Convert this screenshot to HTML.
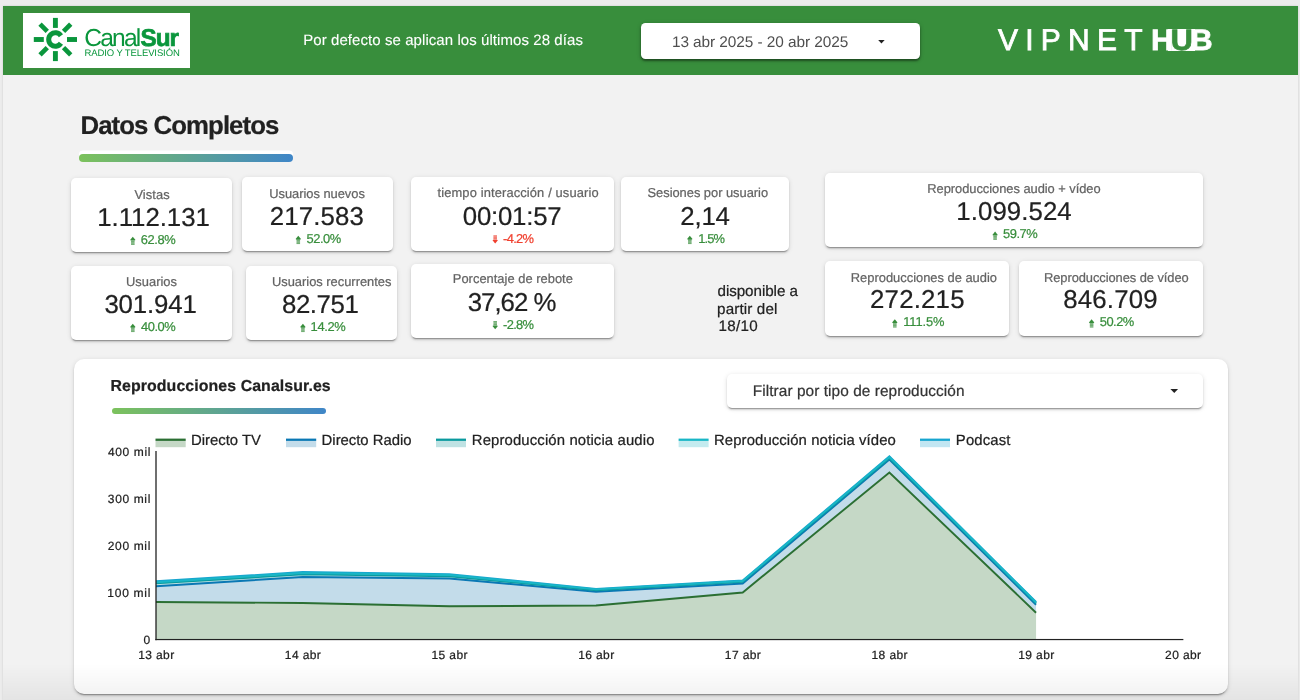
<!DOCTYPE html>
<html lang="es"><head><meta charset="utf-8"><title>Datos Completos</title>
<style>
html,body{margin:0;padding:0}
body{width:1300px;height:700px;overflow:hidden;background:#ececec;font-family:"Liberation Sans",sans-serif;text-rendering:geometricPrecision;position:relative}
#page{position:absolute;left:3.3px;top:5.6px;width:1294.3px;height:695px;background:#f2f2f2;box-shadow:0 0 2px rgba(0,0,0,.14)}
#hdr{position:absolute;left:3.4px;top:5.8px;width:1294.2px;height:69px;background:#388e3c}
.t{position:absolute;white-space:pre;line-height:1;display:block;-webkit-text-stroke:.22px currentColor}
.box{position:absolute;background:#fff}
.card{border-radius:5px;box-shadow:0 2px 1px -1px rgba(0,0,0,.15),0 3px 1px -2px rgba(0,0,0,.14),0 2px 2px 0 rgba(0,0,0,.12),0 1px 5px 0 rgba(0,0,0,.12)}
.bar{position:absolute;background:linear-gradient(90deg,#7cc25c,#3f86c8)}
svg{position:absolute;left:0;top:0;overflow:visible}
#all{position:absolute;left:0;top:0;width:1300px;height:700px;will-change:transform}
#fade{position:absolute;left:3px;top:664px;width:1295px;height:36px;background:linear-gradient(180deg,rgba(0,0,0,0),rgba(0,0,0,.055))}
</style></head><body>
<div id="page"></div>
<div id="hdr"></div>

<div class="box" style="left:23px;top:13px;width:167px;height:55px"></div>
<svg width="1300" height="700" viewBox="0 0 1300 700"><g fill="#0a963c"><rect x="52.95" y="17.90" width="4.9" height="10" transform="rotate(0 55.4 39.5)"/><rect x="53.05" y="17.80" width="4.7" height="10.2" transform="rotate(45 55.4 39.5)"/><rect x="52.95" y="17.90" width="4.9" height="10" transform="rotate(90 55.4 39.5)"/><rect x="53.05" y="17.80" width="4.7" height="10.2" transform="rotate(135 55.4 39.5)"/><rect x="52.95" y="17.90" width="4.9" height="10" transform="rotate(180 55.4 39.5)"/><rect x="53.05" y="17.80" width="4.7" height="10.2" transform="rotate(225 55.4 39.5)"/><rect x="52.95" y="17.90" width="4.9" height="10" transform="rotate(270 55.4 39.5)"/><rect x="53.05" y="17.80" width="4.7" height="10.2" transform="rotate(315 55.4 39.5)"/></g><path d="M60.95 35.75A6.7 6.7 0 1 0 60.95 43.25" fill="none" stroke="#0a963c" stroke-width="5"/></svg>
<div class="box" style="left:640.8px;top:22.8px;width:279.2px;height:36.4px;border-radius:4.5px;box-shadow:0 2px 2px rgba(0,0,0,.35),0 1px 4px rgba(0,0,0,.25)"></div>
<svg width="1300" height="700"><path d="M878.2 40.1h6.5l-3.25 3.3z" fill="#222"/></svg>
<div class="box" style="left:1168px;top:29.2px;width:27px;height:21.6px"></div>
<div class="bar" style="left:79.3px;top:154.2px;width:214.2px;height:8.3px;border-radius:4.2px;box-shadow:0 -3.6px 0 0 #fff"></div>
<div class="box card" style="left:71.4px;top:177.9px;width:160.8px;height:74.55px"></div>
<div class="box card" style="left:241.7px;top:176.7px;width:151.3px;height:74.6px"></div>
<div class="box card" style="left:410.9px;top:177.1px;width:203.2px;height:73.95px"></div>
<div class="box card" style="left:621.4px;top:177.2px;width:167.2px;height:73.95px"></div>
<div class="box card" style="left:825.3px;top:172.9px;width:377.7px;height:74.4px"></div>
<div class="box card" style="left:71.4px;top:265.6px;width:160.8px;height:74.4px"></div>
<div class="box card" style="left:245.75px;top:265.7px;width:151.5px;height:74.3px"></div>
<div class="box card" style="left:410.9px;top:263.5px;width:203.2px;height:74.4px"></div>
<div class="box card" style="left:825.1px;top:261.1px;width:184px;height:74.5px"></div>
<div class="box card" style="left:1018.7px;top:261.1px;width:184.1px;height:74.5px"></div>
<svg width="1300" height="700"><g fill="#388e3c"><path d="M132.8 236.65L135.5 239.95L134.6 240.55H131L130.1 239.95z"/><rect x="131.05" y="240.45" width="3.5" height="4.5" opacity=".5"/><rect x="131.05" y="241.15" width="3.5" height=".8" opacity=".5"/><rect x="131.05" y="242.55" width="3.5" height=".8" opacity=".5"/><rect x="131.05" y="243.95" width="3.5" height=".8" opacity=".5"/></g><g fill="#388e3c"><path d="M298.3 235.8L301 239.1L300.1 239.7H296.5L295.6 239.1z"/><rect x="296.55" y="239.6" width="3.5" height="4.5" opacity=".5"/><rect x="296.55" y="240.3" width="3.5" height=".8" opacity=".5"/><rect x="296.55" y="241.7" width="3.5" height=".8" opacity=".5"/><rect x="296.55" y="243.1" width="3.5" height=".8" opacity=".5"/></g><g fill="#f0402f"><path d="M495.2 243.55L497.9 240.25L497 239.65H493.4L492.5 240.25z"/><rect x="493.45" y="235.25" width="3.5" height="4.5" opacity=".5"/><rect x="493.45" y="235.45" width="3.5" height=".8" opacity=".5"/><rect x="493.45" y="236.85" width="3.5" height=".8" opacity=".5"/><rect x="493.45" y="238.25" width="3.5" height=".8" opacity=".5"/></g><g fill="#388e3c"><path d="M689.8 235.8L692.5 239.1L691.6 239.7H688L687.1 239.1z"/><rect x="688.05" y="239.6" width="3.5" height="4.5" opacity=".5"/><rect x="688.05" y="240.3" width="3.5" height=".8" opacity=".5"/><rect x="688.05" y="241.7" width="3.5" height=".8" opacity=".5"/><rect x="688.05" y="243.1" width="3.5" height=".8" opacity=".5"/></g><g fill="#388e3c"><path d="M995.1 231.6L997.8 234.9L996.9 235.5H993.3L992.4 234.9z"/><rect x="993.35" y="235.4" width="3.5" height="4.5" opacity=".5"/><rect x="993.35" y="236.1" width="3.5" height=".8" opacity=".5"/><rect x="993.35" y="237.5" width="3.5" height=".8" opacity=".5"/><rect x="993.35" y="238.9" width="3.5" height=".8" opacity=".5"/></g><g fill="#388e3c"><path d="M132.8 323.8L135.5 327.1L134.6 327.7H131L130.1 327.1z"/><rect x="131.05" y="327.6" width="3.5" height="4.5" opacity=".5"/><rect x="131.05" y="328.3" width="3.5" height=".8" opacity=".5"/><rect x="131.05" y="329.7" width="3.5" height=".8" opacity=".5"/><rect x="131.05" y="331.1" width="3.5" height=".8" opacity=".5"/></g><g fill="#388e3c"><path d="M302.9 323.8L305.6 327.1L304.7 327.7H301.1L300.2 327.1z"/><rect x="301.15" y="327.6" width="3.5" height="4.5" opacity=".5"/><rect x="301.15" y="328.3" width="3.5" height=".8" opacity=".5"/><rect x="301.15" y="329.7" width="3.5" height=".8" opacity=".5"/><rect x="301.15" y="331.1" width="3.5" height=".8" opacity=".5"/></g><g fill="#388e3c"><path d="M495.2 329.3L497.9 326L497 325.4H493.4L492.5 326z"/><rect x="493.45" y="321" width="3.5" height="4.5" opacity=".5"/><rect x="493.45" y="321.2" width="3.5" height=".8" opacity=".5"/><rect x="493.45" y="322.6" width="3.5" height=".8" opacity=".5"/><rect x="493.45" y="324" width="3.5" height=".8" opacity=".5"/></g><g fill="#388e3c"><path d="M894.8 319.3L897.5 322.6L896.6 323.2H893L892.1 322.6z"/><rect x="893.05" y="323.1" width="3.5" height="4.5" opacity=".5"/><rect x="893.05" y="323.8" width="3.5" height=".8" opacity=".5"/><rect x="893.05" y="325.2" width="3.5" height=".8" opacity=".5"/><rect x="893.05" y="326.6" width="3.5" height=".8" opacity=".5"/></g><g fill="#388e3c"><path d="M1091.6 319.3L1094.3 322.6L1093.4 323.2H1089.8L1088.9 322.6z"/><rect x="1089.85" y="323.1" width="3.5" height="4.5" opacity=".5"/><rect x="1089.85" y="323.8" width="3.5" height=".8" opacity=".5"/><rect x="1089.85" y="325.2" width="3.5" height=".8" opacity=".5"/><rect x="1089.85" y="326.6" width="3.5" height=".8" opacity=".5"/></g></svg>
<div class="box card" style="left:74px;top:359px;width:1153.5px;height:335px;border-radius:10px"></div>
<div class="bar" style="left:111.6px;top:407.7px;width:214.5px;height:6.1px;border-radius:3.1px"></div>
<div class="box card" style="left:727px;top:374px;width:476px;height:33.5px"></div>
<svg width="1300" height="700"><path d="M1170.4 389h7.7l-3.85 4.1z" fill="#222"/></svg>
<svg width="1300" height="700"><polygon points="156,602 302.68,603 449.36,606.3 596.04,605.5 742.71,592.5 889.39,472.5 1036.07,612.7 1036.07,639.5 156,639.5" fill="#c5d8c6"/><polygon points="156,586.2 302.68,577 449.36,578.5 596.04,591.8 742.71,583.5 889.39,459.6 1036.07,604.8 1036.07,612.7 889.39,472.5 742.71,592.5 596.04,605.5 449.36,606.3 302.68,603 156,602" fill="#c3dcea"/><polygon points="156,583.4 302.68,574.4 449.36,576.3 596.04,590.2 742.71,581.9 889.39,458.2 1036.07,603.3 1036.07,604.8 889.39,459.6 742.71,583.5 596.04,591.8 449.36,578.5 302.68,577 156,586.2" fill="#bfe2e3"/><polygon points="156,582.2 302.68,573 449.36,575 596.04,589.4 742.71,581 889.39,457 1036.07,602.5 1036.07,603.3 889.39,458.2 742.71,581.9 596.04,590.2 449.36,576.3 302.68,574.4 156,583.4" fill="#c4ebef"/><polygon points="156,581.3 302.68,572 449.36,574.2 596.04,588.9 742.71,580.4 889.39,456.2 1036.07,602 1036.07,602.5 889.39,457 742.71,581 596.04,589.4 449.36,575 302.68,573 156,582.2" fill="#c2e6f2"/><polyline points="156,602 302.68,603 449.36,606.3 596.04,605.5 742.71,592.5 889.39,472.5 1036.07,612.7" fill="none" stroke="#2b6f33" stroke-width="1.9" stroke-linejoin="miter"/><polyline points="156,586.2 302.68,577 449.36,578.5 596.04,591.8 742.71,583.5 889.39,459.6 1036.07,604.8" fill="none" stroke="#0a78b4" stroke-width="1.9" stroke-linejoin="miter"/><polyline points="156,583.4 302.68,574.4 449.36,576.3 596.04,590.2 742.71,581.9 889.39,458.2 1036.07,603.3" fill="none" stroke="#0a9a9e" stroke-width="1.9" stroke-linejoin="miter"/><polyline points="156,581.3 302.68,572 449.36,574.2 596.04,588.9 742.71,580.4 889.39,456.2 1036.07,602" fill="none" stroke="#17a5cf" stroke-width="1.9" stroke-linejoin="miter"/><polyline points="156,582.2 302.68,573 449.36,575 596.04,589.4 742.71,581 889.39,457 1036.07,602.5" fill="none" stroke="#19b6c6" stroke-width="1.9" stroke-linejoin="miter"/><rect x="155.35" y="451" width="1.3" height="189.2" fill="#222"/><rect x="155.35" y="638.95" width="1028" height="1.2" fill="#222"/><rect x="155.5" y="440.8" width="30.2" height="6.4" fill="#c5d8c6"/><rect x="155.5" y="438.6" width="30.2" height="2.3" fill="#2b6f33"/><rect x="286" y="440.8" width="30.2" height="6.4" fill="#c3dcea"/><rect x="286" y="438.6" width="30.2" height="2.3" fill="#0a78b4"/><rect x="436" y="440.8" width="30" height="6.4" fill="#bfe2e3"/><rect x="436" y="438.6" width="30" height="2.3" fill="#0a9a9e"/><rect x="678.6" y="440.8" width="30" height="6.4" fill="#c4ebef"/><rect x="678.6" y="438.6" width="30" height="2.3" fill="#19b6c6"/><rect x="920" y="440.8" width="30" height="6.4" fill="#c2e6f2"/><rect x="920" y="438.6" width="30" height="2.3" fill="#17a5cf"/></svg>
<div id="all">
<span class="t" style="left:84.37px;top:27px;font-size:24.6px;color:#0a963c;letter-spacing:-1.85px;-webkit-text-stroke:0;">Canal</span>
<span class="t" style="left:140.5px;top:27px;font-size:24.3px;color:#0a963c;font-weight:700;letter-spacing:-1px;-webkit-text-stroke:0.7px #0a963c;">Sur</span>
<span class="t" style="left:84.53px;top:49.12px;font-size:9.5px;color:#0a963c;letter-spacing:-0.11px;-webkit-text-stroke:0;">RADIO Y TELEVISIÓN</span>
<span class="t" style="left:303.23px;top:33px;font-size:15.0px;color:#ffffff;letter-spacing:0.07px;-webkit-text-stroke:.1px #fff;">Por defecto se aplican los últimos 28 días</span>
<span class="t" style="left:671.95px;top:35px;font-size:15.4px;color:#4f4f4f;letter-spacing:-0.07px;-webkit-text-stroke:0;">13 abr 2025 - 20 abr 2025</span>
<span class="t" style="left:997.99px;top:26px;font-size:30px;color:#ffffff;letter-spacing:7.24px;-webkit-text-stroke:0.8px #fff;">VIPNET</span>
<span class="t" style="left:1150.7px;top:26px;font-size:29.5px;font-weight:700;letter-spacing:-2.3px;transform:scaleX(1.04);transform-origin:0 0;background-image:linear-gradient(90deg,#fff 0,#fff 20.45px,#388e3c 20.45px,#388e3c 39.6px,#fff 39.6px);-webkit-background-clip:text;background-clip:text;-webkit-text-fill-color:transparent;-webkit-text-stroke:.8px transparent;padding-right:6px">HUB</span>
<span class="t" style="left:80.48px;top:114px;font-size:25.8px;color:#212121;font-weight:700;letter-spacing:-0.95px;">Datos Completos</span>
<span class="t" style="left:134.43px;top:189px;font-size:12.9px;color:#636363;letter-spacing:0.08px;">Vistas</span>
<span class="t" style="left:97.28px;top:206px;font-size:25.8px;color:#212121;letter-spacing:-0.04px;">1.112.131</span>
<span class="t" style="left:140.76px;top:234px;font-size:12.9px;color:#388e3c;letter-spacing:-0.4px;">62.8%</span>
<span class="t" style="left:269.27px;top:188px;font-size:12.9px;color:#636363;letter-spacing:-0.03px;">Usuarios nuevos</span>
<span class="t" style="left:269.84px;top:205px;font-size:25.8px;color:#212121;letter-spacing:0.12px;">217.583</span>
<span class="t" style="left:306.51px;top:233px;font-size:12.9px;color:#388e3c;letter-spacing:-0.47px;">52.0%</span>
<span class="t" style="left:437.47px;top:187px;font-size:12.9px;color:#636363;letter-spacing:0.13px;">tiempo interacción / usuario</span>
<span class="t" style="left:462.75px;top:205px;font-size:25.8px;color:#212121;letter-spacing:-0.21px;">00:01:57</span>
<span class="t" style="left:503.06px;top:233px;font-size:12.9px;color:#f0402f;letter-spacing:-0.67px;">-4.2%</span>
<span class="t" style="left:647.53px;top:187px;font-size:12.9px;color:#636363;letter-spacing:-0.03px;">Sesiones por usuario</span>
<span class="t" style="left:680.34px;top:205px;font-size:25.8px;color:#212121;letter-spacing:-0.2px;">2,14</span>
<span class="t" style="left:698.18px;top:233px;font-size:12.9px;color:#388e3c;letter-spacing:-0.86px;">1.5%</span>
<span class="t" style="left:927.26px;top:183px;font-size:12.9px;color:#636363;letter-spacing:-0.04px;">Reproducciones audio + vídeo</span>
<span class="t" style="left:956.33px;top:200px;font-size:25.8px;color:#212121;letter-spacing:0.07px;">1.099.524</span>
<span class="t" style="left:1003.01px;top:228px;font-size:12.9px;color:#388e3c;letter-spacing:-0.45px;">59.7%</span>
<span class="t" style="left:125.97px;top:276px;font-size:12.9px;color:#636363;letter-spacing:0.02px;">Usuarios</span>
<span class="t" style="left:104.38px;top:293px;font-size:25.8px;color:#212121;letter-spacing:-0.13px;">301.941</span>
<span class="t" style="left:141.04px;top:321px;font-size:12.9px;color:#388e3c;letter-spacing:-0.47px;">40.0%</span>
<span class="t" style="left:271.97px;top:276px;font-size:12.9px;color:#636363;letter-spacing:-0.01px;">Usuarios recurrentes</span>
<span class="t" style="left:281.95px;top:293px;font-size:25.8px;color:#212121;letter-spacing:-0.4px;">82.751</span>
<span class="t" style="left:310.58px;top:321px;font-size:12.9px;color:#388e3c;letter-spacing:-0.36px;">14.2%</span>
<span class="t" style="left:452.81px;top:273px;font-size:12.9px;color:#636363;letter-spacing:0.02px;">Porcentaje de rebote</span>
<span class="t" style="left:467.78px;top:291px;font-size:25.8px;color:#212121;letter-spacing:-1.01px;">37,62 %</span>
<span class="t" style="left:503.06px;top:319px;font-size:12.9px;color:#388e3c;letter-spacing:-0.67px;">-2.8%</span>
<span class="t" style="left:850.81px;top:272px;font-size:12.9px;color:#636363;">Reproducciones de audio</span>
<span class="t" style="left:870.04px;top:288px;font-size:25.8px;color:#212121;letter-spacing:0.2px;">272.215</span>
<span class="t" style="left:903.18px;top:316px;font-size:12.9px;color:#388e3c;letter-spacing:-0.1px;">111.5%</span>
<span class="t" style="left:1044.01px;top:272px;font-size:12.9px;color:#636363;letter-spacing:-0.07px;">Reproducciones de vídeo</span>
<span class="t" style="left:1063.25px;top:288px;font-size:25.8px;color:#212121;letter-spacing:0.17px;">846.709</span>
<span class="t" style="left:1099.71px;top:316px;font-size:12.9px;color:#388e3c;letter-spacing:-0.48px;">50.2%</span>
<span class="t" style="left:717.51px;top:284px;font-size:15.2px;color:#212121;letter-spacing:-0.06px;">disponible a</span>
<span class="t" style="left:717.05px;top:302px;font-size:15.2px;color:#212121;letter-spacing:0.14px;">partir del</span>
<span class="t" style="left:718.45px;top:319px;font-size:15.2px;color:#212121;letter-spacing:0.3px;">18/10</span>
<span class="t" style="left:110.52px;top:379px;font-size:15.9px;color:#212121;font-weight:700;letter-spacing:0.08px;">Reproducciones Canalsur.es</span>
<span class="t" style="left:752.77px;top:384px;font-size:15.4px;color:#333333;letter-spacing:0.07px;">Filtrar por tipo de reproducción</span>
<span class="t" style="left:191.11px;top:434px;font-size:14.9px;color:#212121;letter-spacing:-0.03px;">Directo TV</span>
<span class="t" style="left:321.61px;top:434px;font-size:14.9px;color:#212121;letter-spacing:-0.02px;">Directo Radio</span>
<span class="t" style="left:471.81px;top:434px;font-size:14.9px;color:#212121;letter-spacing:0.12px;">Reproducción noticia audio</span>
<span class="t" style="left:714.01px;top:434px;font-size:14.9px;color:#212121;letter-spacing:0.09px;">Reproducción noticia vídeo</span>
<span class="t" style="left:955.81px;top:434px;font-size:14.9px;color:#212121;letter-spacing:0.15px;">Podcast</span>
<span class="t" style="left:108.09px;top:446px;font-size:12px;color:#212121;letter-spacing:0.59px;">400 mil</span>
<span class="t" style="left:107.82px;top:493px;font-size:12px;color:#212121;letter-spacing:0.64px;">300 mil</span>
<span class="t" style="left:107.8px;top:540px;font-size:12px;color:#212121;letter-spacing:0.64px;">200 mil</span>
<span class="t" style="left:107.36px;top:587px;font-size:12px;color:#212121;letter-spacing:0.71px;">100 mil</span>
<span class="t" style="left:143.47px;top:634px;font-size:12px;color:#212121;">0</span>
<span class="t" style="left:138.16px;top:649px;font-size:12px;color:#212121;letter-spacing:0.39px;">13 abr</span>
<span class="t" style="left:284.84px;top:649px;font-size:12px;color:#212121;letter-spacing:0.39px;">14 abr</span>
<span class="t" style="left:431.52px;top:649px;font-size:12px;color:#212121;letter-spacing:0.39px;">15 abr</span>
<span class="t" style="left:578.2px;top:649px;font-size:12px;color:#212121;letter-spacing:0.39px;">16 abr</span>
<span class="t" style="left:724.87px;top:649px;font-size:12px;color:#212121;letter-spacing:0.39px;">17 abr</span>
<span class="t" style="left:871.55px;top:649px;font-size:12px;color:#212121;letter-spacing:0.39px;">18 abr</span>
<span class="t" style="left:1018.23px;top:649px;font-size:12px;color:#212121;letter-spacing:0.39px;">19 abr</span>
<span class="t" style="left:1165.1px;top:649px;font-size:12px;color:#212121;letter-spacing:0.4px;">20 abr</span>
</div>
<div id="fade"></div>
</body></html>
